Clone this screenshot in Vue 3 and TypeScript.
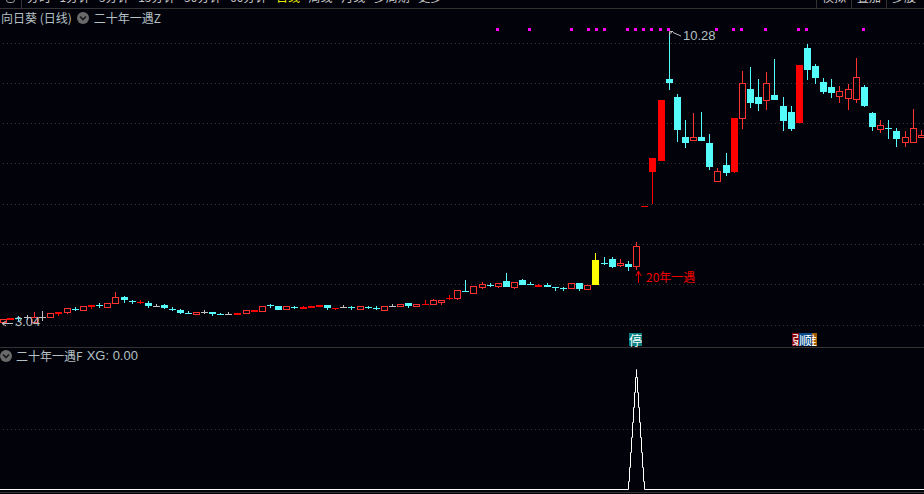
<script setup lang="ts">
type Kind = 'h' | 'r' | 'c' | 'g' | 'y'
type Candle = [number, number, number, number, number, Kind]

const candles: Candle[] = [
  [3,319,323,319,323,'h'],[10,318,320,318,320,'r'],[18,318,318,316,321,'c'],[27,317,317,315,320,'g'],
  [34,317,323,312,323,'h'],[42,317,317,311,321,'g'],[50,313,318,313,318,'h'],[58,312,314,312,316,'r'],
  [67,308,313,308,314,'h'],[75,309,309,307,311,'c'],[83,306,311,306,311,'h'],[91,305,307,305,309,'r'],
  [99,305,305,303,308,'c'],[107,303,308,303,308,'h'],[115,297,304,292,304,'h'],[124,297,300,296,303,'c'],
  [132,301,301,300,304,'c'],[140,302,302,300,304,'r'],[148,303,306,301,308,'c'],[156,306,306,304,307,'g'],
  [164,305,308,304,309,'c'],[172,309,309,307,311,'c'],[180,310,313,309,314,'c'],[188,313,313,311,314,'c'],
  [196,312,315,312,315,'h'],[204,312,312,310,314,'g'],[212,312,314,312,316,'c'],[220,314,314,313,315,'c'],
  [228,314,314,312,315,'g'],[237,313,315,313,315,'r'],[246,310,314,310,314,'h'],[254,310,312,310,312,'r'],
  [262,306,312,306,312,'h'],[270,305,305,304,308,'c'],[278,306,310,306,310,'c'],[286,306,310,306,310,'h'],
  [294,307,307,306,309,'c'],[303,307,309,306,309,'r'],[311,306,308,306,308,'r'],[319,305,307,305,307,'r'],
  [327,305,308,305,310,'c'],[335,308,309,308,310,'r'],[343,307,307,305,308,'g'],[351,307,307,306,310,'c'],
  [360,306,310,306,310,'h'],[368,307,307,306,309,'c'],[376,308,308,306,310,'c'],[384,306,311,306,311,'h'],
  [392,306,306,304,307,'g'],[400,304,307,304,307,'h'],[408,303,306,303,308,'c'],[416,304,307,304,307,'h'],
  [425,304,305,300,305,'r'],[433,300,305,299,305,'h'],[441,300,303,300,305,'h'],[449,298,298,295,300,'r'],
  [457,290,299,290,300,'h'],[465,291,291,280,292,'c'],[473,286,294,286,294,'h'],[482,284,288,282,289,'h'],
  [490,285,285,283,287,'c'],[498,283,287,283,288,'h'],[506,281,287,273,287,'c'],[514,282,288,282,289,'h'],
  [522,280,285,279,285,'c'],[530,284,284,282,285,'c'],[538,285,287,284,287,'r'],[547,285,287,283,287,'c'],
  [555,287,287,287,291,'c'],[563,288,288,287,291,'c'],[571,283,289,283,289,'h'],[579,283,289,283,291,'c'],
  [587,285,290,285,290,'h'],[595,260,285,253,285,'y'],[604,263,263,257,265,'c'],[612,259,267,257,268,'c'],
  [620,263,266,259,267,'h'],[628,264,267,261,271,'c'],[636,246,267,242,270,'h'],[644,206,207,206,207,'r'],
  [652,158,172,158,204,'r'],[661,100,161,100,161,'r'],[669,79,83,32,90,'c'],[677,97,130,94,142,'c'],
  [685,137,143,120,148,'c'],[693,137,141,113,141,'h'],[701,137,141,112,141,'c'],[709,143,167,134,170,'c'],
  [717,171,182,168,182,'h'],[726,165,173,153,176,'c'],[734,118,172,118,173,'r'],[742,83,119,71,129,'h'],
  [750,89,103,67,108,'c'],[758,97,104,79,111,'c'],[766,83,101,72,110,'h'],[774,95,100,59,100,'c'],
  [783,106,121,97,131,'c'],[791,112,129,106,131,'c'],[799,65,123,65,123,'r'],[807,48,70,44,80,'c'],
  [815,66,78,64,84,'c'],[823,82,92,78,94,'c'],[831,87,93,79,98,'c'],[839,91,97,86,103,'h'],
  [848,89,99,84,110,'h'],[856,77,100,58,103,'h'],[864,87,106,85,107,'c'],[872,113,127,112,131,'c'],
  [880,125,130,120,133,'h'],[888,128,128,120,139,'c'],[896,131,139,128,147,'c'],[905,137,143,131,147,'h'],
  [913,128,143,109,143,'h'],[921,135,138,130,138,'h'],
]

const bars = candles.map(([x, top, bottom, high, low, kind]) => ({
  x, top, high, low, bottom, kind, height: Math.max(bottom - top, 1),
}))

const markers = [496, 528, 570, 587, 595, 603, 626, 634, 642, 650, 659, 667, 715, 732, 740, 764, 797, 805, 862]
const mainGrid = [43, 83, 123, 163, 204, 244, 284, 325]
const tabs = ['分时', '1分钟', '5分钟', '15分钟', '30分钟', '60分钟', '日线', '周线', '月线', '多周期', '更多']
const tools = ['模拟', '叠加', '多股']

const stepX = [628.5, 629.5, 630.5, 631.5, 632.5, 633.5, 634.5, 635.5]
const stepY = [481.5, 467.5, 452.5, 437.5, 422.5, 407.5, 392.5, 377.5]
let rising = '0,489.5 628.5,489.5'
stepX.forEach((x, i) => { rising += ` ${x},${stepY[i]} ${x + 1},${stepY[i]}` })
let falling = ''
for (let i = stepX.length - 1; i >= 0; i--) {
  const x = 644.5 - (stepX[i] - 628.5)
  falling += ` ${x - 1},${stepY[i]} ${x},${stepY[i]}`
}
const signal = `${rising} 636.5,369.5${falling} 644.5,489.5 924,489.5`
</script>

<template>
  <div class="page">
    <header class="topbar">
      <span class="tool-icon"></span>
      <nav class="tabs">
        <span v-for="t in tabs" :key="t" class="tab" :class="{ active: t === '日线' }">{{ t }}</span>
      </nav>
      <div class="tools">
        <span v-for="t in tools" :key="t" class="tool">{{ t }}</span>
      </div>
    </header>

    <section class="main">
      <svg class="canvas" width="924" height="338" viewBox="0 9 924 338">
        <line v-for="y in mainGrid" :key="y" class="grid" x1="3" x2="924" :y1="y + 0.5" :y2="y + 0.5" />
        <rect v-for="x in markers" :key="x" class="marker" :x="x" y="28" width="3" height="3" />
        <g v-for="b in bars" :key="b.x" :class="`k-${b.kind}`">
          <rect class="wick" :x="b.x" :y="b.high" width="1" :height="b.top - b.high" />
          <rect class="wick" :x="b.x" :y="b.top + b.height" width="1" :height="Math.max(b.low - b.top - b.height, 0)" />
          <rect class="body" :x="b.kind === 'h' ? b.x - 2.5 : b.x - 3" :y="b.kind === 'h' ? b.top + 0.5 : b.top"
            :width="b.kind === 'h' ? 6 : 7" :height="b.kind === 'h' ? b.height - 1 : b.height" />
        </g>
        <path class="leader" d="M669.5 31.5 H673 M669.5 31.5 V35 M669.5 33.5 L672 32.5 M673 32.5 L681 36" />
        <path class="leader" d="M13 323.5 H2 M2 323.5 L6 321 M2 323.5 L6 326" />
        <path class="up" d="M638.5 283 V272 M638.5 271 L636 276 M638.5 271 L641 276" />
      </svg>

      <div class="legend">
        <span>向日葵 (日线)</span>
        <svg class="chevron" width="12" height="12" viewBox="0 0 12 12">
          <circle cx="6" cy="6" r="6" class="chev-disc" />
          <path d="M3 4.5 L6 7.5 L9 4.5" class="chev-line" />
        </svg>
        <span>二十年一遇Z</span>
      </div>

      <span class="note latin high">10.28</span>
      <span class="note latin low">3.04</span>
      <span class="note signal-name">20年一遇</span>
      <span class="tag stop">停</span>
      <div class="tag-group">
        <span class="tag t-red">弱</span>
        <span class="tag t-blue">顺</span>
        <span class="tag t-orange">推</span>
      </div>
    </section>

    <section class="sub">
      <svg class="canvas" width="924" height="146" viewBox="0 348 924 146">
        <line class="grid" x1="3" x2="924" y1="429.5" y2="429.5" />
        <polyline class="signal" :points="signal" />
        <line class="floor" x1="0" x2="924" y1="492.5" y2="492.5" />
      </svg>
      <div class="legend sub-legend">
        <svg class="chevron" width="12" height="12" viewBox="0 0 12 12">
          <circle cx="6" cy="6" r="6" class="chev-disc" />
          <path d="M3 4.5 L6 7.5 L9 4.5" class="chev-line" />
        </svg>
        <span>二十年一遇F</span>
        <span class="latin">XG: 0.00</span>
      </div>
    </section>
  </div>
</template>

<style>
html, body { margin: 0; background: #02020a; }
</style>

<style scoped>
.page {
  width: 924px;
  height: 494px;
  display: flex;
  flex-direction: column;
  overflow: hidden;
  background: #02020a;
  color: #b4c0c4;
  font: 12px/16px "Noto Sans CJK SC", "Liberation Sans", sans-serif;
}
.latin {
  font-family: "Liberation Sans", sans-serif;
  font-size: 13px;
}
.topbar {
  height: 8px;
  flex: none;
  display: flex;
  align-items: flex-end;
  overflow: hidden;
  border-bottom: 1px solid #333;
  color: #c8c8c8;
}
.tool-icon {
  width: 9px;
  height: 12px;
  flex: none;
  margin: 0 6px 5px 6px;
  border: 1px solid #999;
  border-radius: 3px;
  box-sizing: border-box;
}
.tabs {
  display: flex;
  gap: 8.6px;
  height: 16px;
  padding: 0 0 4px 5px;
  margin-bottom: -1px;
  border-left: 1px solid #333;
  flex: 1;
}
.tab.active { color: #e8e800; }
.tools { display: flex; margin-bottom: -1px; padding-right: 3px; }
.tool {
  width: 34px;
  height: 16px;
  padding-bottom: 4px;
  text-align: center;
  border-left: 1px solid #333;
}
.main {
  height: 338px;
  flex: none;
  position: relative;
  border-bottom: 1px solid #333;
}
.sub {
  flex: 1;
  position: relative;
}
.canvas {
  position: absolute;
  inset: 0;
  display: block;
}
.grid {
  stroke: #363636;
  stroke-width: 1;
  stroke-dasharray: 1 3;
}
.marker { fill: #ff00ff; }
.k-h .wick, .k-h .body { shape-rendering: crispEdges; }
.k-h .wick { fill: #ff3232; }
.k-h .body { fill: none; stroke: #ff3232; stroke-width: 1; }
.k-r .wick, .k-r .body { fill: #ff0000; }
.k-c .wick, .k-c .body { fill: #54fcfc; }
.k-g .wick, .k-g .body { fill: #c0c0c0; }
.k-y .wick, .k-y .body { fill: #ffff00; }
.leader { fill: none; stroke: #c0c0c0; stroke-width: 1; }
.up { fill: none; stroke: #f00000; stroke-width: 1; }
.signal { fill: none; stroke: #fff; stroke-width: 1; }
.floor { stroke: #333; stroke-width: 1; }
.legend {
  position: absolute;
  top: 1px;
  left: 1px;
  display: flex;
  align-items: center;
  gap: 5px;
  white-space: nowrap;
}
.sub-legend { top: 0; left: 0; gap: 4px; }
.chev-disc { fill: #6a6a6a; }
.chev-line { fill: none; stroke: #16161c; stroke-width: 1.6; }
.chevron { flex: none; }
.note {
  position: absolute;
  white-space: nowrap;
}
.high { left: 683px; top: 19px; }
.low { left: 15px; top: 305px; }
.signal-name { left: 646px; top: 260px; color: #f00000; }
.tag {
  position: absolute;
  left: 629px;
  top: 324px;
  width: 13px;
  height: 13px;
  color: #fff;
  font-size: 13px;
  line-height: 13px;
  text-align: center;
}
.stop { background: #0a8080; }
.tag-group {
  position: absolute;
  left: 792px;
  top: 324px;
  width: 25px;
  height: 13px;
  overflow: hidden;
}
.tag-group .tag { top: 0; }
.t-red { left: 0; background: #8a0000; }
.t-orange { left: 12px; background: #a05a00; }
.t-blue { left: 7px; background: #0a4a8a; z-index: 1; }
</style>
